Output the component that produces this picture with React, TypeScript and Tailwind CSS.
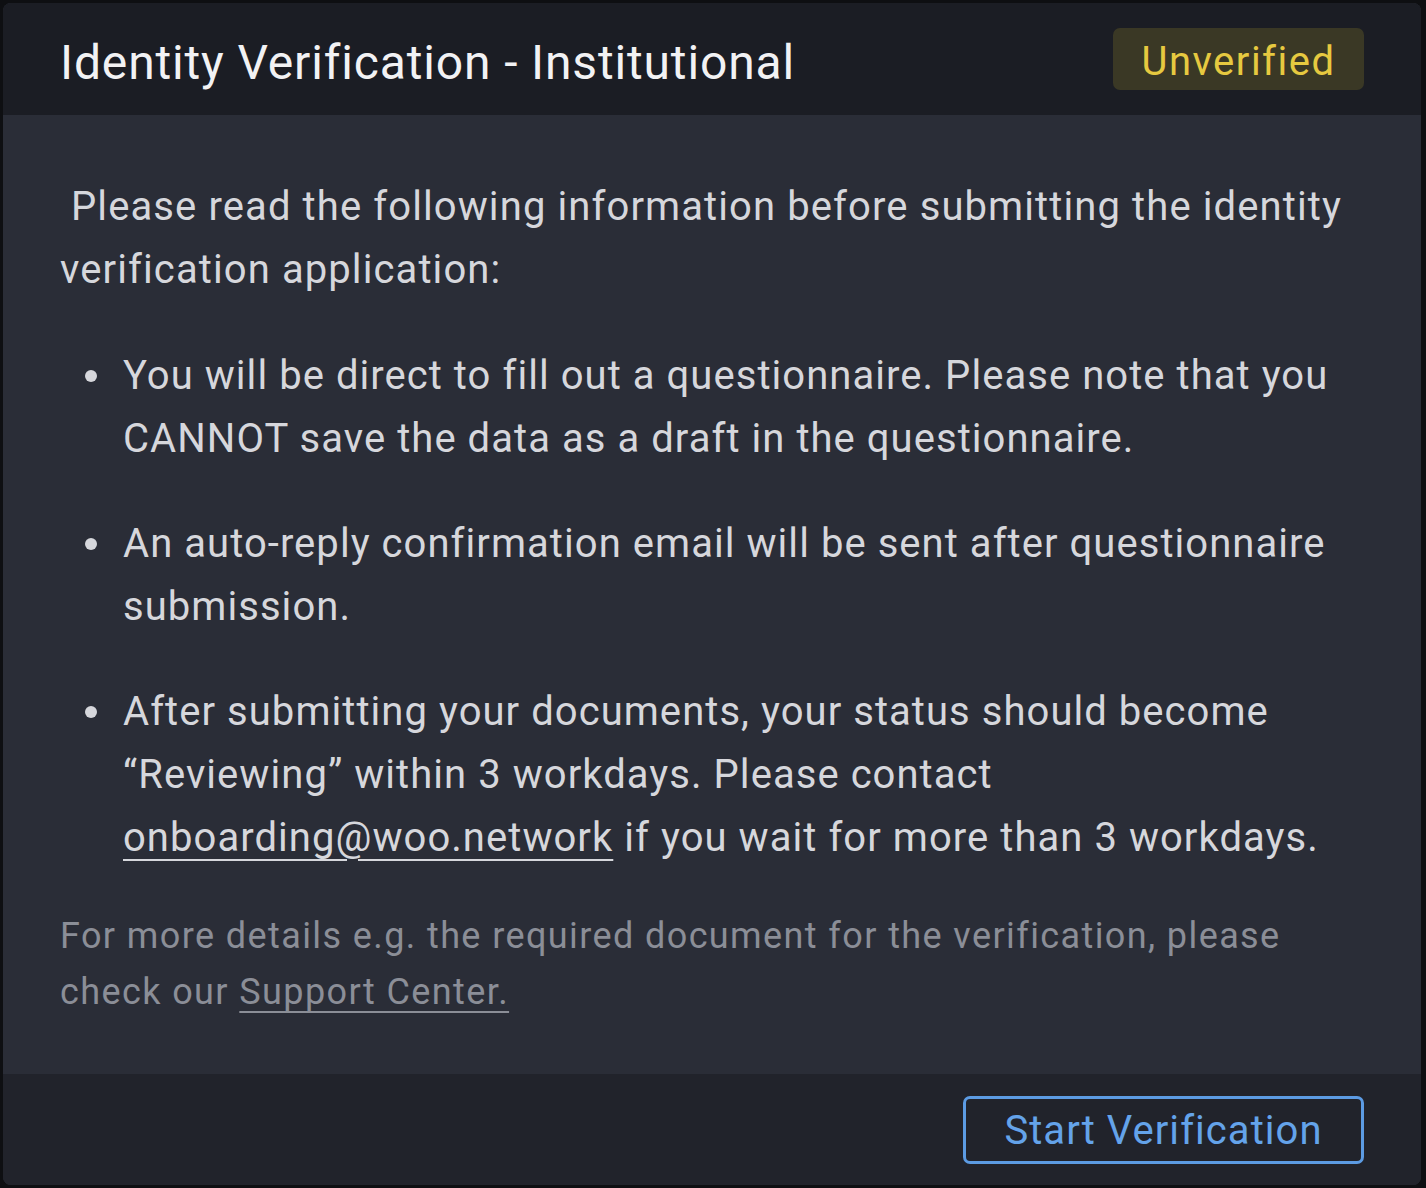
import React from "react";

export default function App() {
  const font = { fontFamily: "Roboto, 'Noto Sans', sans-serif" };
  return (
    <div className="w-[1426px] h-[1188px] bg-[#0e0f12] p-[3px] pr-[5px]" style={font}>
      <div className="w-full h-full rounded-[8px] overflow-hidden flex flex-col bg-[#2a2d37]">
        <div className="h-[112px] shrink-0 bg-[#1b1d24] flex items-center justify-between px-[57px]">
          <div className="pt-[8px] text-[48px] text-[#f2f2f4] leading-none tracking-[0.85px]">
            Identity Verification - Institutional
          </div>
          <div className="h-[62px] w-[251px] rounded-[7px] bg-[#3a3825] text-[#e6c940] text-[40px] leading-none flex items-center justify-center pt-[5px] tracking-[1.5px]">
            Unverified
          </div>
        </div>
        <div className="flex-1 px-[57px] pt-[60px] text-[#d6d7dc]">
          <p className="text-[40px] leading-[63px] tracking-[1.1px]">
            {"\u00a0"}Please read the following information before submitting the identity verification application:
          </p>
          <ul className="mt-[43px] flex flex-col gap-[42px] text-[40px] leading-[63px] tracking-[1.05px]">
            <li className="flex">
              <span className="w-[63px] shrink-0 flex justify-center pr-[2px]">
                <span className="mt-[26px] w-[12px] h-[12px] rounded-full bg-[#d6d7dc]" />
              </span>
              <span>You will be direct to fill out a questionnaire. Please note that you CANNOT save the data as a draft in the questionnaire.</span>
            </li>
            <li className="flex">
              <span className="w-[63px] shrink-0 flex justify-center pr-[2px]">
                <span className="mt-[26px] w-[12px] h-[12px] rounded-full bg-[#d6d7dc]" />
              </span>
              <span>An auto-reply confirmation email will be sent after questionnaire submission.</span>
            </li>
            <li className="flex">
              <span className="w-[63px] shrink-0 flex justify-center pr-[2px]">
                <span className="mt-[26px] w-[12px] h-[12px] rounded-full bg-[#d6d7dc]" />
              </span>
              <span>
                After submitting your documents, your status should become “Reviewing” within 3 workdays. Please contact{" "}
                <a className="underline underline-offset-[8px] decoration-[2px]">onboarding@woo.network</a> if you wait for more than 3 workdays.
              </span>
            </li>
          </ul>
          <p className="mt-[39px] text-[36px] leading-[56px] text-[#8b8e97] tracking-[1.4px]">
            For more details e.g. the required document for the verification, please check our{" "}
            <a className="underline underline-offset-[7px] decoration-[2px]">Support Center.</a>
          </p>
        </div>
        <div className="h-[111px] shrink-0 bg-[#21232b] flex items-center justify-end px-[57px]">
          <button className="h-[68px] w-[401px] rounded-[7px] border-[3px] border-[#5c9be3] text-[#64a3ea] text-[40px] leading-none tracking-[1.05px] flex items-center justify-center pt-[2px]">
            Start Verification
          </button>
        </div>
      </div>
    </div>
  );
}
